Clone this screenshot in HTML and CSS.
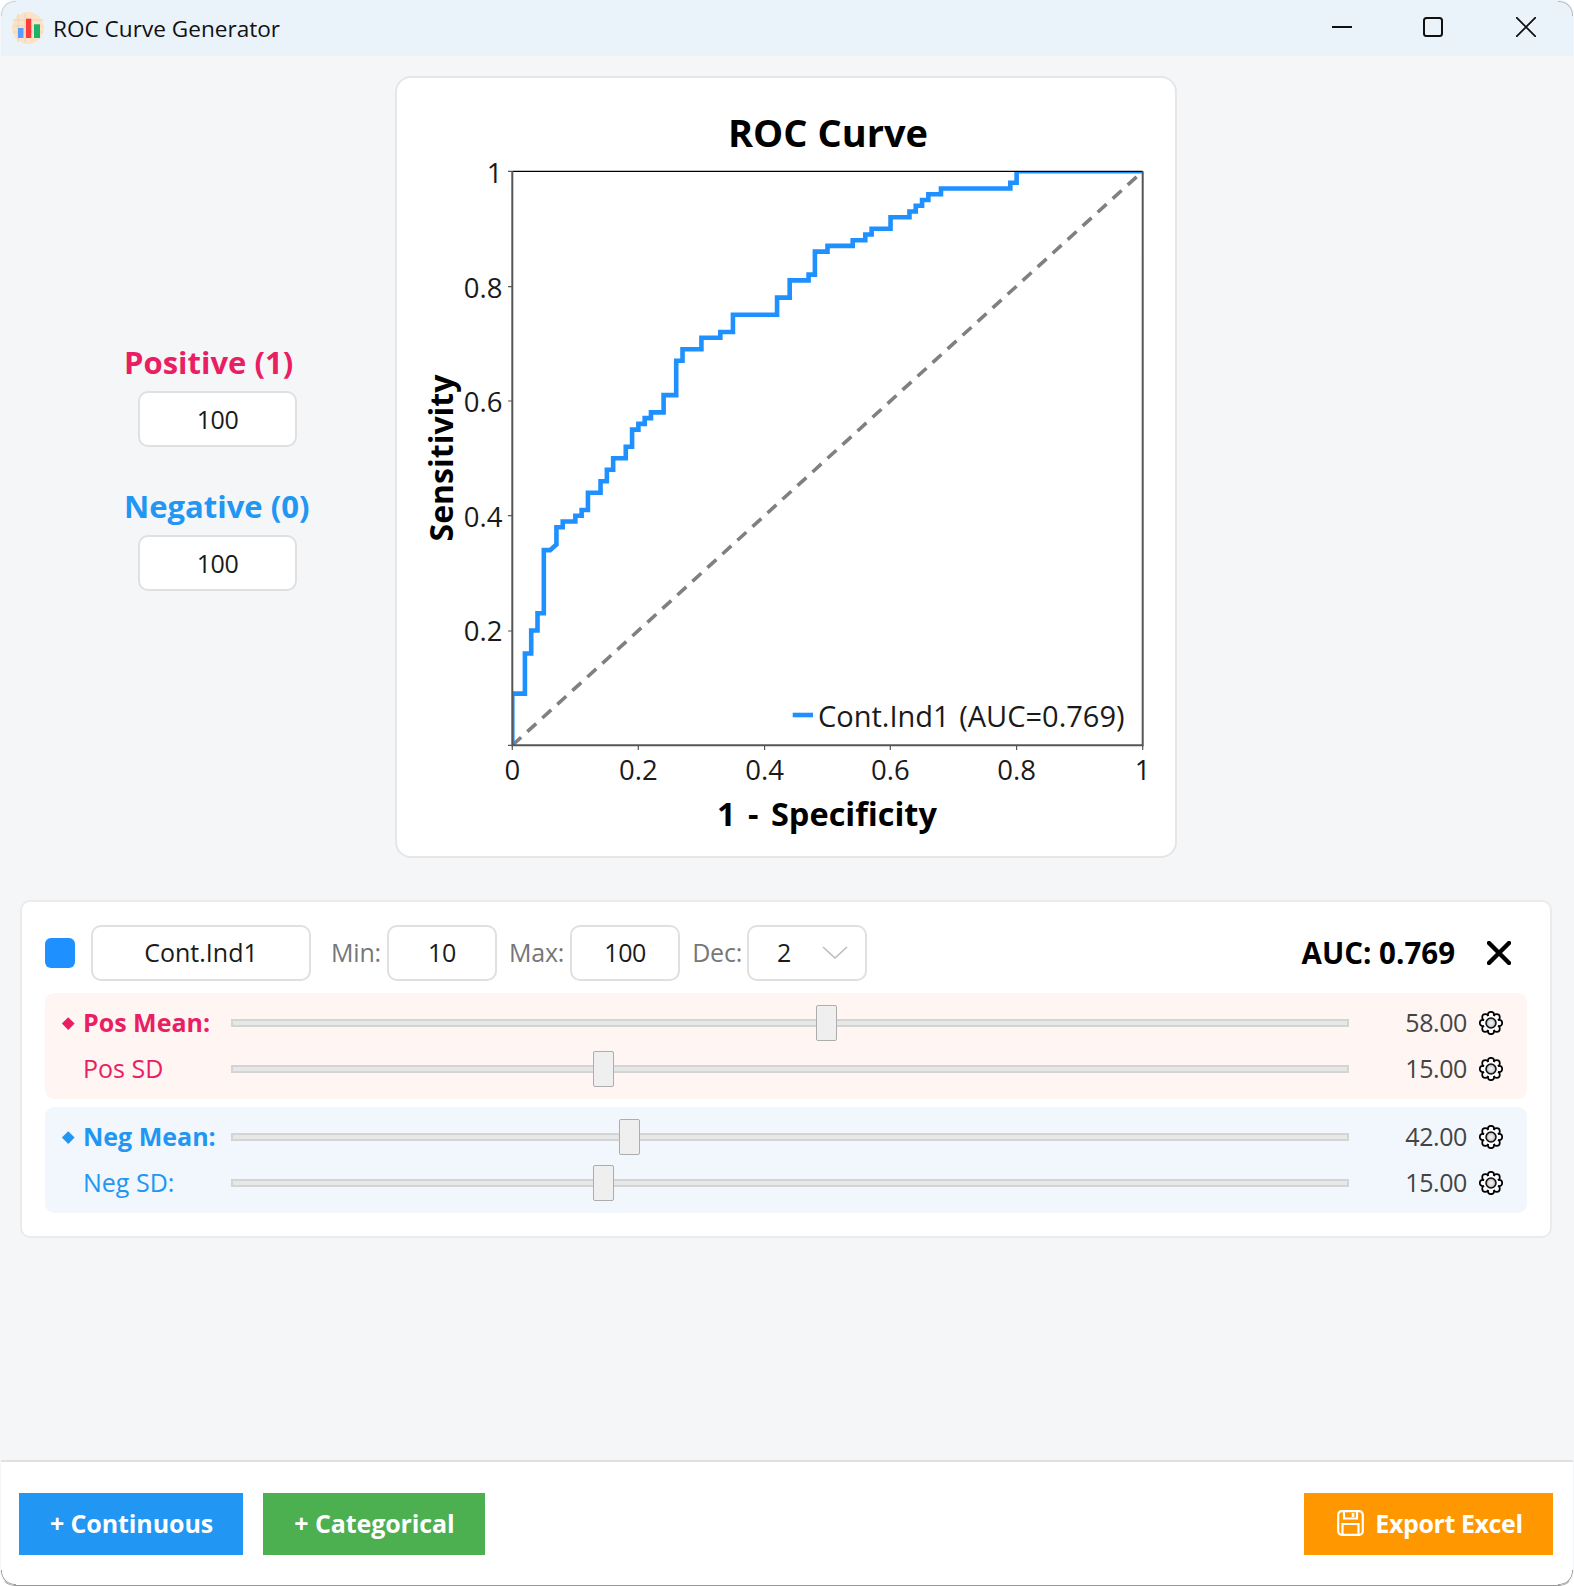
FILE: index.html
```html
<!DOCTYPE html>
<html lang="en">
<head>
    <meta charset="UTF-8">
    <title>ROC Curve Generator</title>
    <link rel="stylesheet" href="styles.css">
</head>
<body>
    <svg class="defs" width="0" height="0">
        <defs>
            <radialGradient id="gearFill">
                <stop offset="0" stop-color="#f6f6f6"/>
                <stop offset="0.6" stop-color="#d8d8d8"/>
                <stop offset="1" stop-color="#777"/>
            </radialGradient>
            <symbol id="gear" viewBox="0 0 24 24">
                <g fill="#fff" stroke="#000" stroke-width="1.7">
                    <circle cx="12" cy="3.9" r="3.1"/>
                    <circle cx="17.7" cy="6.3" r="3.1"/>
                    <circle cx="20.1" cy="12" r="3.1"/>
                    <circle cx="17.7" cy="17.7" r="3.1"/>
                    <circle cx="12" cy="20.1" r="3.1"/>
                    <circle cx="6.3" cy="17.7" r="3.1"/>
                    <circle cx="3.9" cy="12" r="3.1"/>
                    <circle cx="6.3" cy="6.3" r="3.1"/>
                </g>
                <circle cx="12" cy="12" r="7.6" fill="#fff"/>
                <circle cx="12" cy="12" r="5" fill="url(#gearFill)" stroke="#111" stroke-width="1.5"/>
            </symbol>
        </defs>
    </svg>

    <div class="window">
        <!-- Title bar -->
        <div class="titlebar">
            <svg class="app-icon" width="32" height="32" viewBox="0 0 32 32">
                <circle cx="16" cy="16" r="16" fill="#fbe3c8"/>
                <path d="M1 8H31M1 14H31M1 20H31M6 2V30M13 1V31" stroke="#ecd4b8" stroke-width="1" fill="none"/>
                <rect x="6" y="16" width="5.5" height="10" fill="#5b9dff"/>
                <rect x="14" y="6.7" width="5.3" height="19.3" fill="#ff3b3b"/>
                <rect x="22" y="12.3" width="6" height="13.7" fill="#1db36b"/>
            </svg>
            <span class="app-title">ROC Curve Generator</span>
            <div class="window-buttons">
                <svg class="win-min" width="20" height="20" viewBox="0 0 20 20"><path d="M0 10H20" stroke="#111" stroke-width="2"/></svg>
                <svg class="win-max" width="20" height="20" viewBox="0 0 20 20"><rect x="1" y="1" width="18" height="18" rx="2.5" fill="none" stroke="#111" stroke-width="2"/></svg>
                <svg class="win-close" width="20" height="20" viewBox="0 0 20 20"><path d="M0 0L20 20M20 0L0 20" stroke="#111" stroke-width="1.8"/></svg>
            </div>
        </div>

        <div class="main">
            <div class="top-row">
                <!-- Sample sizes -->
                <div class="sample-sizes">
                    <label class="sample-label pos">Positive (1)</label>
                    <input class="field sample-input" type="text" value="100">
                    <label class="sample-label neg">Negative (0)</label>
                    <input class="field sample-input" type="text" value="100">
                </div>

                <!-- Chart, drawn in page coordinates -->
                <div class="chart-card">
                    <svg class="chart" width="778" height="778" viewBox="397 78 778 778">
                        <defs>
                            <clipPath id="plotClip"><rect x="512.3" y="171.3" width="630.4" height="574"/></clipPath>
                        </defs>
                        <text class="chart-title" x="828" y="147">ROC Curve</text>

                        <g clip-path="url(#plotClip)">
                            <path class="diagonal" d="M512.3 745.3L1142.7 171.3"/>
                            <path class="curve" transform="translate(512.3 745.3) scale(6.304 -5.74)"
                                d="M0 0V9H2V16H3V20H4V23H5V34H6L7 35V38H8V39H10V40H11V41H12V44H14V46H15V48H16V50H18V52H19V55H20V56H21V57H22V58H24V61H26V67H27V69H30V71H33V72H35V75H42V78H44V81H47V82H48V86H50V87H54V88H56V89H57V90H60V92H63V93H64V94H65V95H66V96H68V97H79V98H80V100H100"/>
                        </g>

                        <path class="axis-top" d="M512.3 171.3H1142.7"/>
                        <path class="axis" d="M512.3 171.3V745.3H1142.7V171.3"/>
                        <path class="tick" d="M508 171.3H512M508 286.7H512M508 401H512M508 515.7H512M508 631H512M508 745.3H512"/>
                        <path class="tick" d="M512.3 745V750M638.3 745V750M764.6 745V750M890.3 745V750M1016.6 745V750M1142.7 745V750"/>

                        <text class="tick-label end" x="502.5" y="183">1</text>
                        <text class="tick-label end" x="502.5" y="298">0.8</text>
                        <text class="tick-label end" x="502.5" y="412">0.6</text>
                        <text class="tick-label end" x="502.5" y="527">0.4</text>
                        <text class="tick-label end" x="502.5" y="641">0.2</text>

                        <text class="tick-label mid" x="512.3" y="779.5">0</text>
                        <text class="tick-label mid" x="638.3" y="779.5">0.2</text>
                        <text class="tick-label mid" x="764.6" y="779.5">0.4</text>
                        <text class="tick-label mid" x="890.3" y="779.5">0.6</text>
                        <text class="tick-label mid" x="1016.6" y="779.5">0.8</text>
                        <text class="tick-label mid" x="1142.7" y="779.5">1</text>

                        <text class="axis-title spaced" x="827" y="826">1 - Specificity</text>
                        <text class="axis-title" transform="rotate(-90 453 458)" x="453" y="458">Sensitivity</text>

                        <path class="legend-line" d="M792.7 715H813"/>
                        <text class="legend-text" x="818" y="727">Cont.Ind1 (AUC=0.769)</text>
                    </svg>
                </div>
            </div>

            <!-- Indicator panel -->
            <div class="panel">
                <div class="panel-head">
                    <div class="swatch"></div>
                    <input class="field name-input" type="text" value="Cont.Ind1">
                    <label class="range-label first">Min:</label>
                    <input class="field range-input" type="text" value="10">
                    <label class="range-label tight">Max:</label>
                    <input class="field range-input" type="text" value="100">
                    <label class="range-label dec">Dec:</label>
                    <div class="select-wrap">
                        <select class="field dec-select"><option>2</option></select>
                        <svg class="chevron" width="26" height="13" viewBox="0 0 26 13"><path d="M1 1L13 12L25 1" fill="none" stroke="#bdbdbd" stroke-width="1.6"/></svg>
                    </div>
                    <span class="auc">AUC: 0.769</span>
                    <svg class="remove" width="24" height="24" viewBox="0 0 24 24"><path d="M2 2L22 22M22 2L2 22" stroke="#000" stroke-width="4.4" stroke-linecap="round"/></svg>
                </div>

                <div class="group group-pos">
                    <div class="param">
                        <span class="diamond"></span>
                        <span class="param-name strong">Pos Mean:</span>
                        <div class="track"><div class="thumb" style="left: 53.3%"></div></div>
                        <span class="param-value">58.00</span>
                        <svg class="gear" width="24" height="24"><use href="#gear"/></svg>
                    </div>
                    <div class="param">
                        <span></span>
                        <span class="param-name">Pos SD</span>
                        <div class="track"><div class="thumb" style="left: 33.3%"></div></div>
                        <span class="param-value">15.00</span>
                        <svg class="gear" width="24" height="24"><use href="#gear"/></svg>
                    </div>
                </div>

                <div class="group group-neg">
                    <div class="param">
                        <span class="diamond"></span>
                        <span class="param-name strong">Neg Mean:</span>
                        <div class="track"><div class="thumb" style="left: 35.6%"></div></div>
                        <span class="param-value">42.00</span>
                        <svg class="gear" width="24" height="24"><use href="#gear"/></svg>
                    </div>
                    <div class="param">
                        <span></span>
                        <span class="param-name">Neg SD:</span>
                        <div class="track"><div class="thumb" style="left: 33.3%"></div></div>
                        <span class="param-value">15.00</span>
                        <svg class="gear" width="24" height="24"><use href="#gear"/></svg>
                    </div>
                </div>
            </div>
        </div>

        <!-- Bottom buttons -->
        <div class="footer">
            <button class="btn btn-blue">+ Continuous</button>
            <button class="btn btn-green">+ Categorical</button>
            <button class="btn btn-orange">
                <svg width="27" height="26" viewBox="0 0 27 26" fill="none" stroke="#fff" stroke-width="2.2">
                    <rect x="1.2" y="1.2" width="24.6" height="23.6" rx="3.5"/>
                    <path d="M7 1.5V8.5H20V1.5"/>
                    <path d="M16 3V7" stroke-width="2.6"/>
                    <path d="M5.5 24.5V14H21.5V24.5"/>
                </svg>
                Export Excel
            </button>
        </div>
    </div>
</body>
</html>
```

FILE: styles.css
```css
* {
    box-sizing: border-box;
}
html, body {
    margin: 0;
    padding: 0;
    background: #fff;
}
body {
    font-family: "Open Sans", "Noto Sans", sans-serif;
    font-size: 25px;
    color: #1a1a1a;
}
.defs {
    position: absolute;
}
.window {
    position: relative;
    width: 1574px;
    height: 1586px;
    display: flex;
    flex-direction: column;
    overflow: hidden;
    background: #f4f6f8;
    border: 1px solid;
    border-color: #eaf3fa #f4f6f8 #9a9a9a #f4f6f8;
    border-radius: 15px;
}
/* thin grey arcs on the window corners */
.window::before,
.window::after,
.footer::before,
.footer::after {
    content: "";
    position: absolute;
    width: 14px;
    height: 14px;
    border: 0 solid #b8b8b8;
}
.window::before {
    top: 0;
    left: 0;
    border-width: 1px 0 0 1px;
    border-top-left-radius: 14px;
    border-color: #cfcfcf;
}
.window::after {
    top: 0;
    right: 0;
    border-width: 1px 1px 0 0;
    border-top-right-radius: 14px;
}
.footer::before {
    bottom: 0;
    left: 0;
    border-width: 0 0 1px 1px;
    border-bottom-left-radius: 14px;
    border-color: #9a9a9a;
}
.footer::after {
    bottom: 0;
    right: 0;
    border-width: 0 1px 1px 0;
    border-bottom-right-radius: 14px;
    border-color: #9a9a9a;
}

/* title bar */
.titlebar {
    height: 55px;
    flex: none;
    display: flex;
    align-items: center;
    padding-left: 11px;
    background: #eaf3fa;
}
.app-icon {
    flex: none;
    margin-top: -2px;
}
.app-title {
    margin-left: 9px;
    font-size: 22.6px;
    color: #111;
}
.window-buttons {
    margin-left: auto;
    display: flex;
    align-items: center;
    margin-top: -3px;
    margin-right: 37px;
}
.win-min {
    margin-right: 71px;
}
.win-max {
    margin-right: 73px;
}

/* top part */
.main {
    flex: 1;
}
.top-row {
    display: flex;
    align-items: center;
    margin-top: 20px;
    margin-left: 123px;
}
.sample-sizes {
    width: 185px;
    display: flex;
    flex-direction: column;
    margin-right: 86px;
    margin-bottom: 2px;
}
.sample-label {
    font-size: 31px;
    line-height: 40px;
    font-weight: 700;
    white-space: nowrap;
}
.pos {
    color: #e91e63;
}
.neg {
    color: #2196f3;
}
.field {
    height: 56px;
    padding: 0 0 2px;
    border: 2px solid #e0e0e0;
    border-radius: 10px;
    background: #fff;
    font-family: inherit;
    font-size: 25px;
    letter-spacing: -0.4px;
    color: #1a1a1a;
    text-align: center;
    outline: none;
}
.sample-input {
    width: 159px;
    padding: 0;
    margin: 9px 0 39px 14px;
}
.sample-input:last-child {
    margin-bottom: 0;
}
.chart-card {
    width: 782px;
    height: 782px;
    flex: none;
    background: #fff;
    border: 2px solid #e6e6e6;
    border-radius: 16px;
}
.chart {
    display: block;
}
.chart-title {
    font-size: 38px;
    font-weight: 700;
    text-anchor: middle;
    fill: #000;
}
.curve {
    fill: none;
    stroke: #1e90ff;
    stroke-width: 4.6;
    vector-effect: non-scaling-stroke;
}
.diagonal {
    fill: none;
    stroke: #808080;
    stroke-width: 3.6;
    stroke-dasharray: 12 8.3;
}
.axis {
    fill: none;
    stroke: #555;
    stroke-width: 2;
}
.axis-top {
    fill: none;
    stroke: #000;
    stroke-width: 1.2;
}
.tick {
    fill: none;
    stroke: #555;
    stroke-width: 1.2;
}
.tick-label {
    font-size: 27.5px;
    fill: #1a1a1a;
}
.end {
    text-anchor: end;
}
.mid {
    text-anchor: middle;
}
.axis-title {
    font-size: 32px;
    font-weight: 700;
    text-anchor: middle;
    fill: #000;
}
.axis-title.spaced {
    font-size: 32.5px;
    word-spacing: 4px;
}
.legend-line {
    stroke: #1e90ff;
    stroke-width: 4.6;
}
.legend-text {
    font-size: 29px;
    word-spacing: 2px;
    fill: #1a1a1a;
}

/* indicator panel */
.panel {
    width: 1532px;
    margin: 42px 0 0 19px;
    padding: 23px 23px 23px;
    background: #fff;
    border: 2px solid #ebebeb;
    border-radius: 10px;
}
.panel-head {
    display: flex;
    align-items: center;
    margin-bottom: 12px;
}
.swatch {
    width: 30px;
    height: 30px;
    flex: none;
    margin-right: 16px;
    border-radius: 6px;
    background: #1e90ff;
}
.name-input {
    width: 220px;
    flex: none;
    letter-spacing: 0;
}
.range-input {
    width: 110px;
    flex: none;
}
.range-label {
    margin: -2px 6px 0 12px;
    letter-spacing: -0.2px;
    color: #777;
}
.range-label.first {
    margin-left: 20px;
}
.range-label.dec {
    margin-right: 5px;
}
.select-wrap {
    position: relative;
    width: 120px;
    flex: none;
}
.dec-select {
    width: 100%;
    padding-left: 28px;
    text-align: left;
    appearance: none;
    -webkit-appearance: none;
    display: block;
}
.chevron {
    position: absolute;
    right: 19px;
    top: 21px;
}
.auc {
    margin-left: auto;
    font-size: 29.5px;
    font-weight: 700;
    color: #000;
    margin-top: -2px;
}
.remove {
    flex: none;
    margin: 0 16px 0 32px;
}
.group {
    padding: 7px 24px 7px 18px;
    border-radius: 9px;
}
.group + .group {
    margin-top: 8px;
}
.group-pos {
    background: #fff5f3;
    color: #e91e63;
}
.group-neg {
    background: #f2f7fe;
    color: #2196f3;
}
.param {
    height: 46px;
    display: grid;
    grid-template-columns: 20px 148px 1118px 118px 36px;
    align-items: center;
}
.diamond {
    width: 8.5px;
    height: 8.5px;
    margin-left: 1px;
    background: currentColor;
    transform: rotate(45deg);
}
.param-name {
    margin-top: -2px;
}
.param-name.strong {
    font-weight: 700;
}
.track {
    position: relative;
    height: 8px;
    background: #e6e8e8;
    border: 2px solid #d4d4d4;
}
.thumb {
    position: absolute;
    top: -16px;
    width: 21px;
    height: 36px;
    margin-left: -11px;
    background: #efefef;
    border: 1.5px solid #adadad;
    border-radius: 2px;
}
.param-value {
    margin-top: -2px;
    text-align: right;
    letter-spacing: -0.4px;
    color: #444;
}
.gear {
    justify-self: end;
}

/* bottom bar */
.footer {
    position: relative;
    height: 125px;
    flex: none;
    display: flex;
    gap: 20px;
    padding: 31px 20px 0 18px;
    background: #fff;
    border-top: 2px solid #e0e0e0;
}
.btn {
    height: 62px;
    display: flex;
    align-items: center;
    justify-content: center;
    padding: 0 0 2px 1px;
    border: none;
    font-family: inherit;
    font-size: 25px;
    font-weight: 700;
    letter-spacing: -0.1px;
    color: #fff;
}
.btn-blue {
    width: 224px;
    background: #2196f3;
}
.btn-green {
    width: 222px;
    background: #4caf50;
}
.btn-orange {
    width: 249px;
    margin-left: auto;
    padding-left: 3px;
    gap: 11px;
    letter-spacing: -0.4px;
    background: #ff9800;
}
```
